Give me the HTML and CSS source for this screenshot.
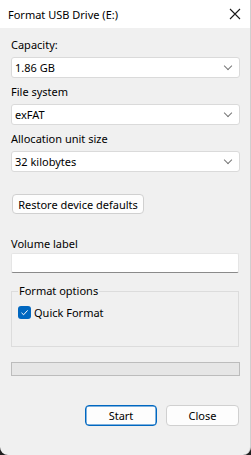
FILE: index.html
```html
<!DOCTYPE html>
<html lang="en">
<head>
  <meta charset="UTF-8" />
  <meta name="viewport" content="width=device-width, initial-scale=1.0"/>
  <title>Format USB Drive (E:)</title>
  <link rel="stylesheet" href="styles.css">
</head>
<body>
  <div class="ventana">

    <div class="titulo">
      <span>Format USB Drive (E:)</span>
      <svg class="cerrar" width="12" height="12" viewBox="0 0 12 12">
        <path d="M1 1 L11 11 M11 1 L1 11" stroke="#1a1a1a" stroke-width="1.1" fill="none"/>
      </svg>
    </div>

    <div class="contenido">
      <div class="campo">
        <label>Capacity:</label>
        <div class="combo"><span>1.86 GB</span><i class="flecha"></i></div>
      </div>
      <div class="campo">
        <label>File system</label>
        <div class="combo"><span>exFAT</span><i class="flecha"></i></div>
      </div>
      <div class="campo">
        <label>Allocation unit size</label>
        <div class="combo"><span>32 kilobytes</span><i class="flecha"></i></div>
      </div>

      <button class="btn restaurar">Restore device defaults</button>

      <div class="campo volumen">
        <label>Volume label</label>
        <div class="texto"></div>
      </div>

      <fieldset class="opciones">
        <legend>Format options</legend>
        <div class="check">
          <span class="caja">
            <svg width="13" height="13" viewBox="0 0 13 13">
              <path d="M3.5 6.8 L5.6 8.8 L9.6 4.4" stroke="#fff" stroke-width="1" fill="none"/>
            </svg>
          </span>
          Quick Format
        </div>
      </fieldset>

      <div class="progreso"></div>

      <div class="acciones">
        <button class="btn principal">Start</button>
        <button class="btn">Close</button>
      </div>
    </div>

  </div>
</body>
</html>
```

FILE: styles.css
```css
/* --------- Base --------- */
html, body { margin:0; height:100%; background:#1f1f1f }
body { font-family:"Noto Sans", "Open Sans", sans-serif; font-size:11px; color:#000 }
.ventana {
  height:455px; box-sizing:border-box;
  background:#f0f0f0; border-right:1px solid #cfcfcf;
  border-radius:0 0 8px 8px; overflow:hidden;
}

/* --------- Title bar --------- */
.titulo {
  height:28px; background:#fff;
  display:flex; align-items:center; justify-content:space-between;
  padding:0 8px 0 8px; font-size:11px
}
.cerrar { margin-right:1px }

/* --------- Content --------- */
.contenido { padding:9px 10px 0 11px; display:flex; flex-direction:column }
.campo { display:flex; flex-direction:column; margin-bottom:6px }
.campo label { line-height:16px; margin-bottom:4px }
.combo {
  height:21px; box-sizing:border-box;
  background:#fff; border:1px solid #dadada; border-radius:3px;
  display:flex; align-items:center; justify-content:space-between;
  padding:0 6px 0 3px
}
.flecha {
  width:5px; height:5px; margin-right:2px; margin-top:-3px;
  border-right:1px solid #777; border-bottom:1px solid #777;
  transform:rotate(45deg)
}

.btn {
  font:inherit; color:#000; white-space:nowrap;
  background:#fdfdfd; border:1px solid #d0d0d0; border-radius:4px;
  height:21px; padding:0; cursor:pointer
}
.restaurar { align-self:flex-start; width:132px; height:20px; margin:16px 0 0 1px }

.volumen { margin-top:22px; margin-bottom:0 }
.volumen label { margin-bottom:1px }
.texto {
  height:20px; box-sizing:border-box; margin-right:1px;
  background:#fff; border:1px solid #e5e5e5; border-bottom:1px solid #8a8a8a;
  border-radius:2px
}

/* --------- Group box --------- */
.opciones {
  margin:10px 1px 0 0; padding:0 6px 26px 6px;
  border:1px solid #dcdcdc; min-width:0
}
.opciones legend { padding:0 1px; line-height:16px }
.check { display:flex; align-items:center; gap:3px; height:16px; margin-top:5px }
.caja {
  width:13px; height:13px; border-radius:3px; background:#0067c0;
  display:flex
}

.progreso {
  margin-top:15px; height:14px; box-sizing:border-box;
  background:#e6e6e6; border:1px solid #bcbcbc
}

.acciones { display:flex; justify-content:flex-end; gap:9px; margin-top:29px; padding-right:1px }
.acciones .btn { width:73px }
.acciones .principal { width:72px; border:1px solid #0067c0; box-shadow:inset 0 0 0 0.5px #0067c0 }
```
